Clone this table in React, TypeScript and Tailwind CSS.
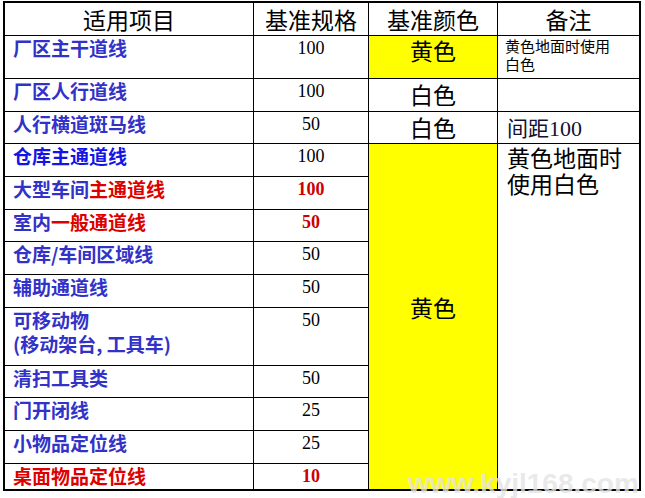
const cjk = { fontFamily: '"Noto Sans CJK SC", sans-serif' }
const num = { fontFamily: '"Liberation Serif", "Noto Sans CJK SC", serif' }

type Row = {
  name: React.ReactNode
  spec: string
  red?: boolean
}

const B = 'text-[#3232c8]'
const R = 'text-[#dd0000]'

const rows: Row[] = [
  { name: <span className={B}>厂区主干道线</span>, spec: '100' },
  { name: <span className={B}>厂区人行道线</span>, spec: '100' },
  { name: <span className={B}>人行横道斑马线</span>, spec: '50' },
  { name: <span className="text-[#1414e6]">仓库主通道线</span>, spec: '100' },
  {
    name: (
      <>
        <span className={B}>大型车间</span>
        <span className={R}>主通道线</span>
      </>
    ),
    spec: '100',
    red: true,
  },
  {
    name: (
      <>
        <span className={B}>室内</span>
        <span className={R}>一般通道线</span>
      </>
    ),
    spec: '50',
    red: true,
  },
  { name: <span className={B}>仓库/车间区域线</span>, spec: '50' },
  { name: <span className={B}>辅助通道线</span>, spec: '50' },
  {
    name: (
      <span className={B}>
        可移动物
        <br />
        <span className="leading-[22px]">(移动架台, 工具车)</span>
      </span>
    ),
    spec: '50',
  },
  { name: <span className={B}>清扫工具类</span>, spec: '50' },
  { name: <span className={B}>门开闭线</span>, spec: '25' },
  { name: <span className={B}>小物品定位线</span>, spec: '25' },
  { name: <span className={R}>桌面物品定位线</span>, spec: '10', red: true },
]

export default function App() {
  return (
    <div className="relative h-[498px] w-[645px] overflow-hidden bg-white">
      <div
        className="ml-[3px] mt-[1px] grid w-[638px] grid-cols-[248px_114px_128px_141px] grid-rows-[32px_42px_32px_31px_32px_32px_31px_32px_32px_57px_31px_32px_32px_25px] gap-px border-2 border-black bg-black"
        style={cjk}
      >
        {['适用项目', '基准规格', '基准颜色', '备注'].map((h) => (
          <div key={h} className="bg-white text-center text-[23px] leading-[32px] text-black">
            {h}
          </div>
        ))}

        {rows.map((r, i) => (
          <Cells key={i} row={r} index={i} />
        ))}
      </div>

      {/* watermark */}
      <div
        className="pointer-events-none absolute left-[408px] top-[468px] whitespace-nowrap text-[28px] font-bold leading-[32px] text-[#e4e4e4]/80"
        style={{ fontFamily: '"Liberation Sans", Arial, sans-serif' }}
      >
        www.kyjl168.com
      </div>
    </div>
  )
}

function Cells({ row, index }: { row: Row; index: number }) {
  const gridRow = index + 2
  return (
    <>
      <div className="bg-white pl-[8px] text-[19px] font-bold leading-[24px]" style={{ gridRow, gridColumn: 1 }}>
        {row.name}
      </div>
      <div
        className={`bg-white pt-[1px] text-center text-[18px] leading-[22px] ${row.red ? 'font-bold text-[#cc0000]' : 'text-black'}`}
        style={{ ...num, gridRow, gridColumn: 2 }}
      >
        {row.spec}
      </div>
      {index === 0 && (
        <>
          <div className="bg-[#ffff00] text-center text-[23px] leading-[28px] text-black" style={{ gridRow, gridColumn: 3 }}>
            黄色
          </div>
          <div className="bg-white pl-[7px] pt-[1px] text-[15px] leading-[18px] text-black" style={{ gridRow, gridColumn: 4 }}>
            黄色地面时使用
            <br />
            白色
          </div>
        </>
      )}
      {index === 1 && (
        <>
          <div className="bg-white text-center text-[23px] leading-[30px] text-black" style={{ gridRow, gridColumn: 3 }}>
            白色
          </div>
          <div className="bg-white" style={{ gridRow, gridColumn: 4 }} />
        </>
      )}
      {index === 2 && (
        <>
          <div className="bg-white text-center text-[23px] leading-[30px] text-black" style={{ gridRow, gridColumn: 3 }}>
            白色
          </div>
          <div className="bg-white pl-[9px] text-[21px] leading-[30px] text-[#111133]" style={{ gridRow, gridColumn: 4 }}>
            间距<span className="text-[22px]" style={num}>100</span>
          </div>
        </>
      )}
      {index === 3 && (
        <>
          <div
            className="flex items-center justify-center bg-[#ffff00] pb-[18px] text-[23px] text-black"
            style={{ gridRow: '5 / span 10', gridColumn: 3 }}
          >
            黄色
          </div>
          <div
            className="bg-white pl-[9px] text-[23px] leading-[26px] text-black"
            style={{ gridRow: '5 / span 10', gridColumn: 4 }}
          >
            黄色地面时
            <br />
            使用白色
          </div>
        </>
      )}
    </>
  )
}
